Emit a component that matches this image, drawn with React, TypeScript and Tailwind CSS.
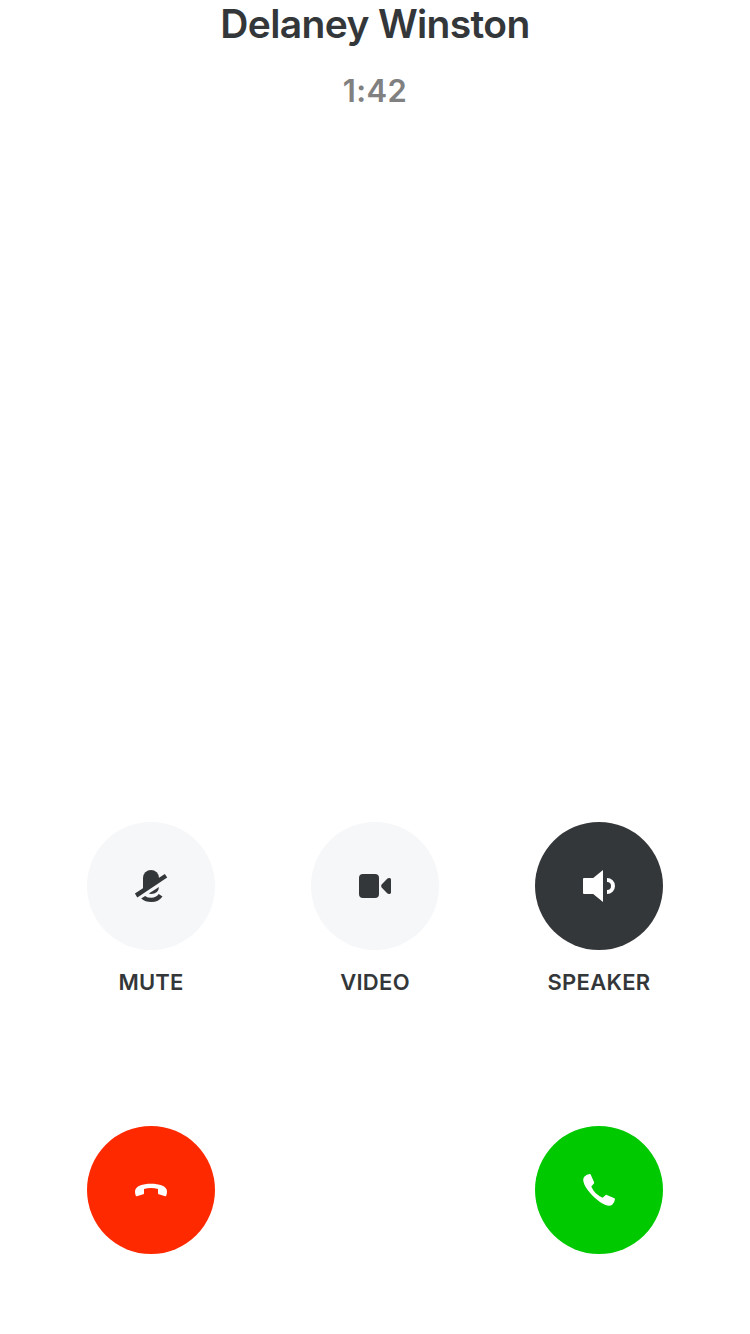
import type { ReactNode } from "react";

const Icon = ({ children }: { children: ReactNode }) => (
  <svg viewBox="0 0 50 50" className="size-[50px]" fill="currentColor" aria-hidden="true">
    {children}
  </svg>
);

const MuteIcon = () => (
  <Icon>
    <path d="M17 17a8 8 0 0 1 16 0v3L17 30Z" />
    <path d="M8.900 32.600 38.800 13l2.400 3.600L11.300 36.400Z" />
    <path d="M22.800 32.600 33 26Q32.500 32.900 25 33 23.800 33 22.800 32.600Z" />
    <path d="m15.200 37.500 3.900-2.600Q21.300 36.800 25.500 36.800q4.400 0 7.200-3.800l3.800 2.500Q32.500 41 25.500 41q-6.500 0-10.300-3.500Z" />
  </Icon>
);

const VideoIcon = () => (
  <Icon>
    <rect x="9" y="13" width="20" height="24" rx="4" />
    <path d="M31.600 23.600 37.200 17.700Q38.300 16.700 39.600 17q1.400.200 1.400 1.500v13q0 1.300-1.400 1.500-1.300.300-2.400-.700l-5.600-5.900q-1-1.400 0-2.800Z" />
  </Icon>
);

const SpeakerIcon = () => (
  <Icon>
    <path d="M9 18q0-1 1-1h9.200L29 9v32l-9.800-8H10q-1 0-1-1Z" />
    <path d="M33 17a8 8 0 0 1 0 16v-4a4 4 0 0 0 0-8Z" />
  </Icon>
);

const EndIcon = () => (
  <Icon>
    <path d="M9 26.500C9 21 17 18.800 25 18.800s16 2.200 16 7.700c0 1.600-.300 2.900-.800 4.300q-.3.700-1 .4l-6.500-2q-.700-.200-.700-1v-4.200q-3.200-1-7-1t-7 1v4.200q0 .800-.700 1l-6.500 2q-.700.300-1-.400C9.300 29.400 9 28.100 9 26.500Z" />
  </Icon>
);

const AnswerIcon = () => (
  <Icon>
    <path d="M10.300 11.800Q12.500 9.300 15.900 9q.600 0 .9.700l3.300 7.600q.300.600-.200 1.100l-2.600 3.100q1.900 4.500 4.400 6.800t6.900 4.400l3.100-2.600q.500-.500 1.100-.200l7.600 3.300q.700.300.600.900-.3 3.400-2.800 5.600C34.500 43 26 38.200 18.900 31.100S7 15.500 10.300 11.800Z" />
  </Icon>
);

type Control = { label: string; tone: string; tracking: string; icon: ReactNode };

const controls: Control[] = [
  { label: "MUTE", tone: "bg-[#f6f7f9] text-[#343739]", tracking: "tracking-[0.15px]", icon: <MuteIcon /> },
  { label: "VIDEO", tone: "bg-[#f6f7f9] text-[#343739]", tracking: "tracking-[0.3px]", icon: <VideoIcon /> },
  { label: "SPEAKER", tone: "bg-[#343739] text-white", tracking: "tracking-[0.3px]", icon: <SpeakerIcon /> },
];

const Round = ({ tone, label, children }: { tone: string; label: string; children: ReactNode }) => (
  <button type="button" aria-label={label} className={`flex size-32 items-center justify-center rounded-full ${tone}`}>
    {children}
  </button>
);

export default function App() {
  return (
    <main className="flex h-[1334px] w-[750px] flex-col bg-white px-[87px] pb-20 font-['Inter',sans-serif] text-[#343739]">
      <header className="flex flex-col items-center">
        <h1 className="text-[39px] leading-12 font-semibold tracking-[-0.65px] whitespace-nowrap">Delaney Winston</h1>
        <p className="mt-[23px] text-[31px] leading-10 font-semibold tracking-[0.4px] text-[#808080]">1:42</p>
      </header>
      <section className="mt-auto flex justify-between">
        {controls.map(({ label, tone, tracking, icon }) => (
          <div key={label} className="flex w-32 flex-col items-center">
            <Round tone={tone} label={label}>{icon}</Round>
            <span className={`mt-5 text-[22px] leading-6 font-[560] ${tracking}`}>{label}</span>
          </div>
        ))}
      </section>
      <footer className="mt-33 flex justify-between">
        <Round tone="bg-[#ff2900] text-white" label="End call"><EndIcon /></Round>
        <Round tone="bg-[#00c900] text-white" label="Answer call"><AnswerIcon /></Round>
      </footer>
    </main>
  );
}
